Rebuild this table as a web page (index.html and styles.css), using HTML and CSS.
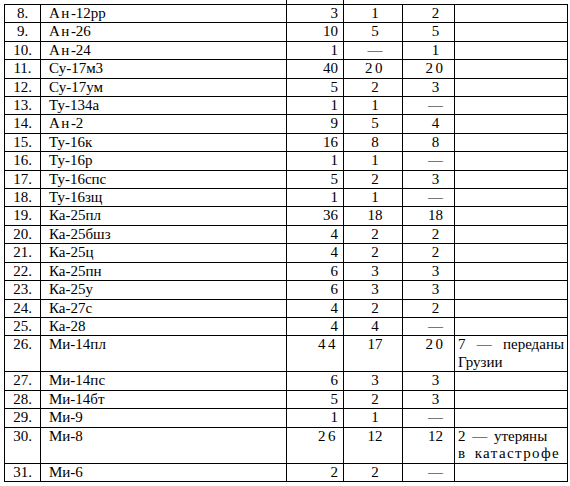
FILE: index.html
```html
<!DOCTYPE html>
<html lang="ru">
<head>
<meta charset="utf-8">
<title>Таблица</title>
<link rel="stylesheet" href="styles.css">
</head>
<body>
<div class="page">
<table class="grid">
<colgroup>
<col class="c-num"><col class="c-name"><col class="c-a"><col class="c-b"><col class="c-c"><col class="c-note">
</colgroup>
<tbody>
<tr class="ext"><td></td><td class="mark"></td><td class="mark"></td><td></td><td></td><td></td></tr>
<tr><td class="num">8.</td><td class="name"><span class="an">Ан</span>-12рр</td><td class="a">3</td><td class="b">1</td><td class="c">2</td><td class="note"></td></tr>
<tr><td class="num">9.</td><td class="name"><span class="an">Ан</span>-26</td><td class="a">10</td><td class="b">5</td><td class="c">5</td><td class="note"></td></tr>
<tr><td class="num">10.</td><td class="name"><span class="an">Ан</span>-24</td><td class="a">1</td><td class="b">—</td><td class="c">1</td><td class="note"></td></tr>
<tr><td class="num">11.</td><td class="name">Су-17м3</td><td class="a">40</td><td class="b sp">20</td><td class="c sp">20</td><td class="note"></td></tr>
<tr><td class="num">12.</td><td class="name">Су-17ум</td><td class="a">5</td><td class="b">2</td><td class="c">3</td><td class="note"></td></tr>
<tr><td class="num">13.</td><td class="name">Ту-134а</td><td class="a">1</td><td class="b">1</td><td class="c">—</td><td class="note"></td></tr>
<tr><td class="num">14.</td><td class="name"><span class="an">Ан</span>-2</td><td class="a">9</td><td class="b">5</td><td class="c">4</td><td class="note"></td></tr>
<tr><td class="num">15.</td><td class="name">Ту-16к</td><td class="a">16</td><td class="b">8</td><td class="c">8</td><td class="note"></td></tr>
<tr><td class="num">16.</td><td class="name">Ту-16р</td><td class="a">1</td><td class="b">1</td><td class="c">—</td><td class="note"></td></tr>
<tr><td class="num">17.</td><td class="name">Ту-16спс</td><td class="a">5</td><td class="b">2</td><td class="c">3</td><td class="note"></td></tr>
<tr><td class="num">18.</td><td class="name">Ту-16зщ</td><td class="a">1</td><td class="b">1</td><td class="c">—</td><td class="note"></td></tr>
<tr><td class="num">19.</td><td class="name">Ка-25пл</td><td class="a">36</td><td class="b">18</td><td class="c">18</td><td class="note"></td></tr>
<tr><td class="num">20.</td><td class="name">Ка-25бшз</td><td class="a">4</td><td class="b">2</td><td class="c">2</td><td class="note"></td></tr>
<tr><td class="num">21.</td><td class="name">Ка-25ц</td><td class="a">4</td><td class="b">2</td><td class="c">2</td><td class="note"></td></tr>
<tr><td class="num">22.</td><td class="name">Ка-25пн</td><td class="a">6</td><td class="b">3</td><td class="c">3</td><td class="note"></td></tr>
<tr><td class="num">23.</td><td class="name">Ка-25у</td><td class="a">6</td><td class="b">3</td><td class="c">3</td><td class="note"></td></tr>
<tr><td class="num">24.</td><td class="name">Ка-27с</td><td class="a">4</td><td class="b">2</td><td class="c">2</td><td class="note"></td></tr>
<tr><td class="num">25.</td><td class="name">Ка-28</td><td class="a">4</td><td class="b">4</td><td class="c">—</td><td class="note"></td></tr>
<tr class="tall"><td class="num">26.</td><td class="name">Ми-14пл</td><td class="a sp">44</td><td class="b">17</td><td class="c sp">20</td><td class="note"><span class="ln just">7 — переданы</span><span class="ln">Грузии</span></td></tr>
<tr><td class="num">27.</td><td class="name">Ми-14пс</td><td class="a">6</td><td class="b">3</td><td class="c">3</td><td class="note"></td></tr>
<tr><td class="num">28.</td><td class="name">Ми-14бт</td><td class="a">5</td><td class="b">2</td><td class="c">3</td><td class="note"></td></tr>
<tr><td class="num">29.</td><td class="name">Ми-9</td><td class="a">1</td><td class="b">1</td><td class="c">—</td><td class="note"></td></tr>
<tr class="tall"><td class="num">30.</td><td class="name">Ми-8</td><td class="a sp">26</td><td class="b">12</td><td class="c">12</td><td class="note"><span class="ln wide">2 — утеряны</span><span class="ln spread">в катастрофе</span></td></tr>
<tr><td class="num">31.</td><td class="name">Ми-6</td><td class="a">2</td><td class="b">2</td><td class="c">—</td><td class="note"></td></tr>
</tbody>
</table>
</div>
</body>
</html>
```

FILE: styles.css
```css
html, body {
  margin: 0;
  padding: 0;
  background: #fff;
  font-family: "Liberation Serif", "DejaVu Serif", serif;
}

.page {
  padding: 0 0 0 4px;
}

.grid {
  border-collapse: collapse;
  table-layout: fixed;
  width: 563px;
  font-family: "Liberation Serif", "DejaVu Serif", serif;
  font-size: 15px;
  line-height: 17.4px;
  color: #000;
}

.c-num { width: 36px; }
.c-name { width: 246px; }
.c-a { width: 57px; }
.c-b { width: 59px; }
.c-c { width: 52px; }
.c-note { width: 113px; }

.grid td {
  border: 1px solid #000;
  padding: 0;
  vertical-align: top;
  white-space: nowrap;
  font-family: "Liberation Serif", "DejaVu Serif", serif;
}

.grid tr.ext td {
  border: none;
  height: 4px;
  line-height: 0;
  font-size: 0;
}

.grid tr.ext td.mark {
  border-right: 1px solid #000;
}

.grid td.num {
  text-align: center;
}

.grid td.name {
  padding-left: 8px;
}

.an {
  letter-spacing: 1.5px;
}

.grid td.a {
  text-align: right;
  padding-right: 5px;
}

.grid td.b {
  text-align: center;
  padding-left: 4px;
}

.grid td.c {
  text-align: center;
  padding-left: 14px;
}

.grid td.sp {
  letter-spacing: 2.5px;
}

.grid td.note {
  padding-left: 3px;
  padding-right: 3px;
}

.ln {
  display: block;
}

.ln.just {
  text-align: justify;
  text-align-last: justify;
}

.ln.wide {
  word-spacing: 3px;
}

.ln.spread {
  letter-spacing: 1.4px;
  word-spacing: 3px;
}

.grid tr.tall td {
  height: 35px;
}
```
